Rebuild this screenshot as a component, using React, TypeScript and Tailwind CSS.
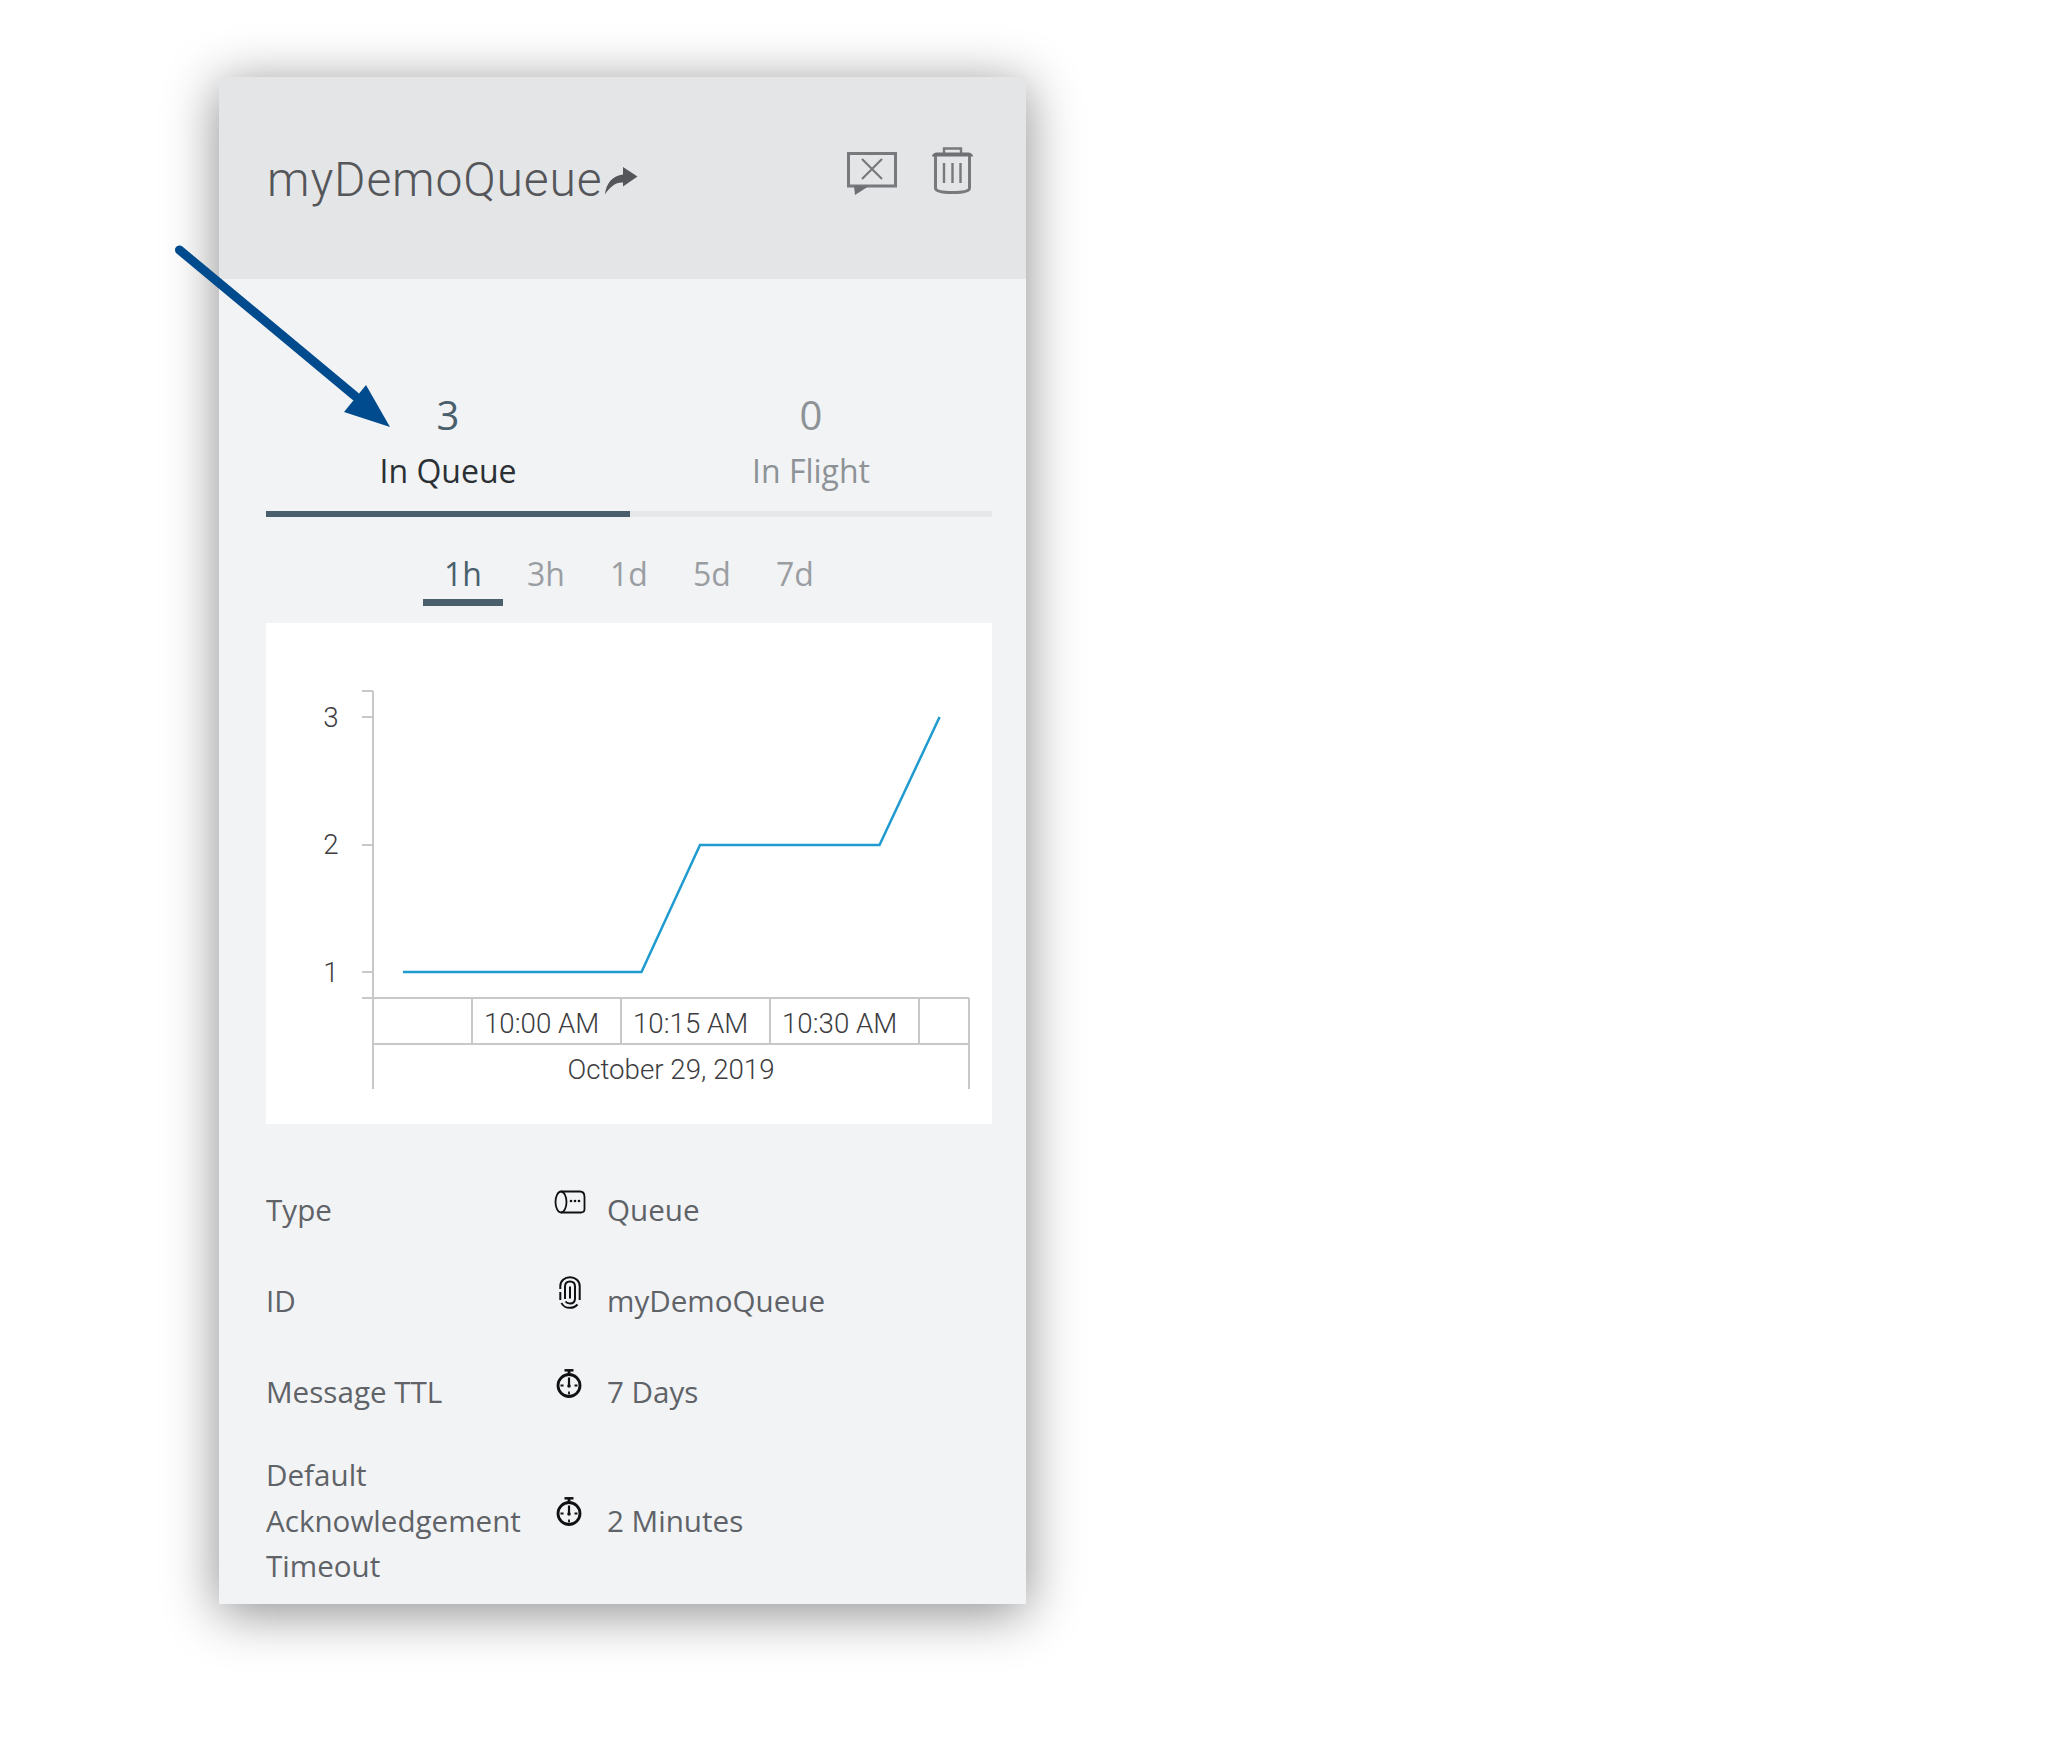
const openSans = "font-['Open_Sans',sans-serif]";

function ShareArrow() {
  return (
    <svg width="34" height="28" viewBox="0 0 34 28" className="ml-[2px] mt-[1px]">
      <path d="M1 27.500C2 16 9 8.500 19 7.500V0L33.500 9.500L19 19.500V15.500C12 15 6 19.500 1 27.500Z" fill="#54565a" />
    </svg>
  );
}

function ChatCloseIcon() {
  return (
    <svg width="50" height="44" viewBox="0 0 50 44" fill="none">
      <path d="M1.500 1.500H48.500V34H1.500Z" stroke="#77797c" strokeWidth="3" />
      <path d="M15 7L35 27M35 7L15 27" stroke="#77797c" strokeWidth="2.2" />
      <path d="M7 34H22L8 43Z" fill="#6d6f72" />
    </svg>
  );
}

function TrashIcon() {
  return (
    <svg width="42" height="47" viewBox="0 0 42 47" fill="none">
      <path d="M12 6.500V1.500H29V6.500" stroke="#77797c" strokeWidth="2.4" />
      <path d="M0 9.500C0 7 3 5.500 5 5.500H36C38 5.500 41 7 41 9.500Z" fill="#6d6f72" />
      <path d="M3.500 9V41C3.500 44 10 45.500 20.500 45.500C31 45.500 37.500 44 37.500 41V9" stroke="#77797c" strokeWidth="3" />
      <path d="M12 16V36M20.500 16V36M28.500 16V36" stroke="#77797c" strokeWidth="2.4" />
    </svg>
  );
}

function QueueIcon() {
  return (
    <svg width="32" height="24" viewBox="0 0 32 24" fill="none" className="mb-[15px]">
      <path d="M7 1.500H26C29 1.500 30.500 4 30.500 7V19C30.500 21 29 22.500 27 22.500H7" stroke="#111" strokeWidth="1.8" />
      <ellipse cx="7" cy="12" rx="5.500" ry="10.500" stroke="#111" strokeWidth="1.8" />
      <circle cx="17" cy="11" r="1.300" fill="#111" />
      <circle cx="21" cy="11" r="1.300" fill="#111" />
      <circle cx="25" cy="11" r="1.300" fill="#111" />
    </svg>
  );
}

function FingerprintIcon() {
  return (
    <svg width="22" height="33" viewBox="0 0 22 33" fill="none" stroke="#111" strokeWidth="2" className="mb-[16px] ml-[5px]">
      <path d="M1.300 13V10C1.300 5 5.500 1.200 11 1.200C16.500 1.200 20.700 5 20.700 10V24" />
      <path d="M1.300 16V24" />
      <path d="M2.500 27C3.500 29.500 7 31.800 11 31.800C14 31.800 16.500 30.800 18.500 28.500" />
      <path d="M6 23V10.500C6 7 8 5.500 11 5.500C14 5.500 16 7 16 10.500V22.500C16 25.500 14 27.500 11 27.500C9 27.500 7.500 26.800 6.500 25.500" />
      <path d="M11 10.500V22.500" />
    </svg>
  );
}

function StopwatchIcon() {
  return (
    <svg width="26" height="30" viewBox="0 0 26 30" fill="none" className="mb-[16px] ml-[2px]">
      <path d="M8.500 1.300H17.500" stroke="#111" strokeWidth="2.500" />
      <path d="M13 1.500V5" stroke="#111" strokeWidth="2.800" />
      <circle cx="13" cy="16.500" r="11" stroke="#111" strokeWidth="2.800" />
      <path d="M13 8.500V16.500" stroke="#111" strokeWidth="2.200" />
      <circle cx="13" cy="17" r="1.800" fill="#111" />
      <path d="M13 22.500V25.500M4.500 16.500H7.500M18.500 16.500H21.500" stroke="#111" strokeWidth="1.800" />
    </svg>
  );
}

function QueueChart() {
  const chartFont = "Roboto, 'Liberation Sans', sans-serif";
  return (
    <svg width="726" height="501" viewBox="0 0 726 501" className="block">
      <g stroke="#c8c8c8" strokeWidth="2" fill="none">
        <path d="M107 68V466" />
        <path d="M96 68H107M96 94H107M96 222H107M96 349H107M96 375H703" />
        <path d="M206 375V421M355 375V421M504 375V421M653 375V421M703 375V466M107 421H703" />
      </g>
      <path
        d="M137 349H375.500L434 222H613.500L673.600 94"
        fill="none"
        stroke="#1f9bcf"
        strokeWidth="2.500"
      />
      <g fontFamily={chartFont} fontWeight="300" fill="#3c3c41" fontSize="27.700">
        <text x="65" y="104" textAnchor="middle">3</text>
        <text x="65" y="231" textAnchor="middle">2</text>
        <text x="65" y="359" textAnchor="middle">1</text>
        <text x="218" y="410">10:00 AM</text>
        <text x="367" y="410">10:15 AM</text>
        <text x="516" y="410">10:30 AM</text>
        <text x="405" y="456" textAnchor="middle">October 29, 2019</text>
      </g>
    </svg>
  );
}

const details = [
  { label: "Type", value: "Queue", icon: <QueueIcon /> },
  { label: "ID", value: "myDemoQueue", icon: <FingerprintIcon /> },
  { label: "Message TTL", value: "7 Days", icon: <StopwatchIcon /> },
  { label: "Default Acknowledgement Timeout", value: "2 Minutes", icon: <StopwatchIcon /> },
];

const ranges = ["1h", "3h", "1d", "5d", "7d"];

export default function App() {
  return (
    <div className={`relative min-h-[1748px] bg-white pl-[219px] pt-[77px] ${openSans}`}>
      <div className="w-[807px] bg-[#f2f3f5] shadow-[0_8px_50px_rgba(0,0,0,0.46)]">
        <header className="flex h-[202px] items-start justify-between bg-[#e4e5e7] pl-[48px] pr-[52px]">
          <div className="mt-[73px] flex items-center">
            <h1 className="font-['Roboto',sans-serif] text-[48px] font-light leading-[60px] tracking-[0.85px] text-[#54565a]">myDemoQueue</h1>
            <ShareArrow />
          </div>
          <div className="mt-[70px] flex items-start gap-[35px]">
            <div className="mt-[5px]"><ChatCloseIcon /></div>
            <TrashIcon />
          </div>
        </header>

        <div className="pl-[47px] pr-[34px] pt-[111px]">
          <div className="flex">
            <div className="flex w-[364px] flex-col items-center border-b-[6px] border-[#4a5f6c]">
              <span className="text-[40px] leading-[50px] text-[#4a5f6c]">3</span>
              <span className="mt-[9px] pb-[18px] text-[32px] leading-[44px] text-[#2b3035]">In Queue</span>
            </div>
            <div className="flex flex-1 flex-col items-center border-b-[6px] border-[#e6e7e9]">
              <span className="text-[40px] leading-[50px] text-[#8d9296]">0</span>
              <span className="mt-[9px] pb-[18px] text-[32px] leading-[44px] text-[#8d9296]">In Flight</span>
            </div>
          </div>

          <div className="mt-[36px] flex justify-center gap-[3px]">
            {ranges.map((range, i) => (
              <div
                key={range}
                className={
                  i === 0
                    ? "h-[53px] w-[80px] border-b-[7px] border-[#4a5f6c] text-center text-[32px] leading-[42px] text-[#4a5f6c]"
                    : "h-[53px] w-[80px] text-center text-[32px] leading-[42px] text-[#9a9ea2]"
                }
              >
                {range}
              </div>
            ))}
          </div>

          <div className="mt-[17px] bg-white">
            <QueueChart />
          </div>

          <div className="mt-[40px]">
            {details.map((row) => (
              <div key={row.label} className="flex min-h-[91px] items-center py-[15px] text-[29.6px] leading-[45.5px] text-[#5f6368]">
                <div className="w-[288px] shrink-0">{row.label}</div>
                <div className="flex w-[53px] shrink-0 justify-start">{row.icon}</div>
                <div>{row.value}</div>
              </div>
            ))}
          </div>
        </div>
      </div>

      <svg width="240" height="200" viewBox="0 0 240 200" className="absolute left-[170px] top-[240px]" fill="none">
        <path d="M9.500 10L185 156" stroke="#004b8d" strokeWidth="9" strokeLinecap="round" />
        <path d="M220 187L174 172L196 145Z" fill="#004b8d" />
      </svg>
    </div>
  );
}
